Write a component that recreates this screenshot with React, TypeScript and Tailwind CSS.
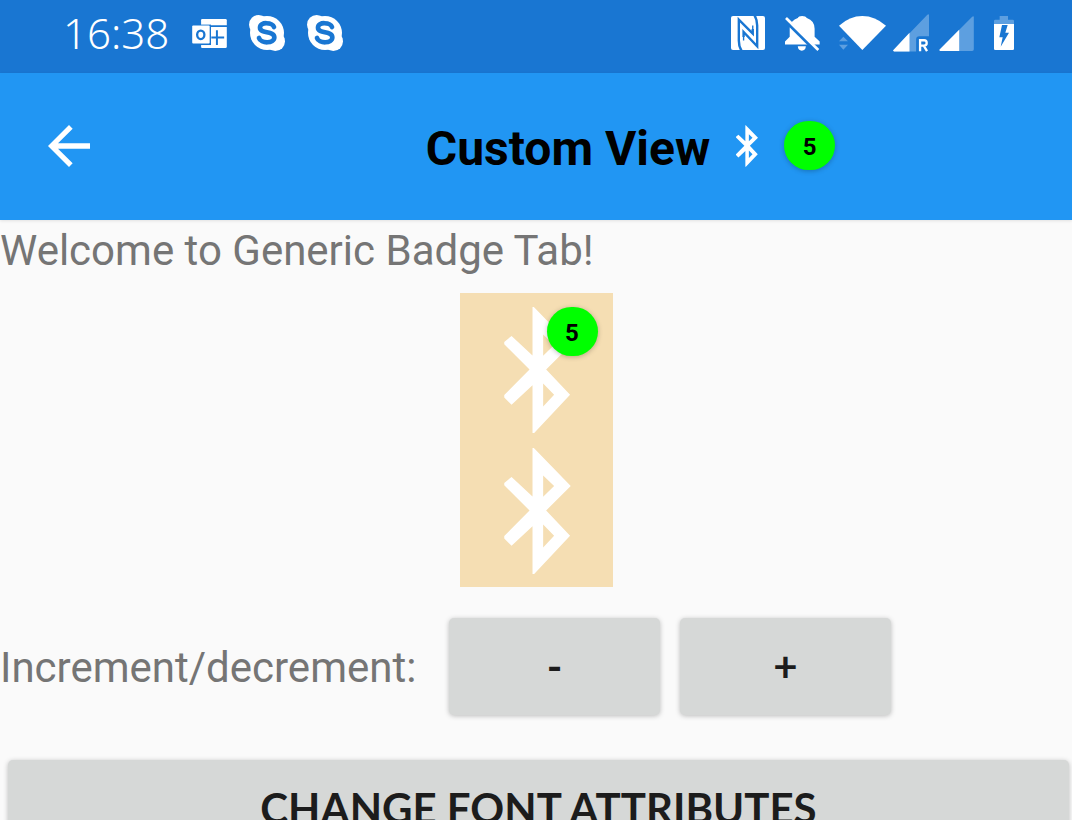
import { useState } from "react";
import type { ReactNode } from "react";

function Bluetooth({ className }: { className: string }) {
  return (
    <svg viewBox="0 0 200 379" className={className} fill="white" fillRule="evenodd" aria-hidden="true">
      <path d="M85 0H89L200 114L126 188L198 264L90 379H85V235L22 294L0 272V265L76 188L0 112V105L22 87L85 146ZM117 83V147L150 114ZM117 230V299L150 264Z" />
    </svg>
  );
}

function Badge({ count }: { count: number }) {
  return (
    <span className="flex h-[49px] w-[51px] items-center justify-center rounded-full bg-[#00ff00] pt-[2px] font-[Roboto,sans-serif] text-2xl font-bold text-black shadow-[0_1px_5px_rgba(0,0,0,0.25)]">
      {count}
    </span>
  );
}

function OutlookIcon() {
  return (
    <svg viewBox="0 0 105 88" className="h-[29px] w-[35px]" aria-hidden="true">
      <path d="M30 0H101Q105 0 105 4V19H27V4Q27 0 30 0Z" fill="white" />
      <path d="M27 24H105V84Q105 88 101 88H30Q27 88 27 84Z" fill="white" />
      <path d="M75 34V79M58 56H97" stroke="#1976d2" strokeWidth="6" />
      <path d="M0 17H57V79H0Z" fill="#1976d2" />
      <rect x="0" y="20" width="53" height="54" rx="3" fill="white" />
      <ellipse cx="26" cy="48" rx="11" ry="13" fill="none" stroke="#1976d2" strokeWidth="7" />
    </svg>
  );
}

function SkypeIcon() {
  return (
    <svg viewBox="0 0 108 108" className="h-9 w-9" aria-hidden="true">
      <circle cx="54" cy="54" r="51" fill="white" />
      <circle cx="29" cy="29" r="29" fill="white" />
      <circle cx="79" cy="79" r="29" fill="white" />
      <path
        d="M75 36C70 22 33 19 33 38C33 57 76 46 76 67C76 87 35 86 30 69"
        fill="none"
        stroke="#1976d2"
        strokeWidth="14"
        strokeLinecap="round"
      />
    </svg>
  );
}

function NfcIcon() {
  return (
    <svg viewBox="0 0 100 100" className="h-[34px] w-[34px]" aria-hidden="true">
      <rect width="100" height="100" rx="6" fill="white" />
      <path d="M31 102Q23 90 23 72V11L64 52V38" fill="none" stroke="#1976d2" strokeWidth="7" />
      <path d="M37 62V47L77 89V28Q77 10 69 -2" fill="none" stroke="#1976d2" strokeWidth="7" />
      <path d="M37 60V72M64 40V28" fill="none" stroke="#1976d2" strokeWidth="4" />
    </svg>
  );
}

function MutedBellIcon() {
  return (
    <svg viewBox="0 0 104 104" className="h-[35px] w-[35px]" aria-hidden="true">
      <path
        d="M38 90H62Q61 103 50 103T38 90ZM0 85V76L14 62V35Q17 13 38 6Q40 0 51 0T65 6Q88 14 88 38V62L103 76V85Z"
        fill="white"
      />
      <path d="M-2 12L94 107" stroke="#1976d2" strokeWidth="9" />
      <path d="M3 6L99 101" stroke="white" strokeWidth="8" />
    </svg>
  );
}

function WifiIcon() {
  return (
    <svg viewBox="0 0 141 102" className="h-[34px] w-[47px]" aria-hidden="true">
      <path d="M0 29Q32 0 70 0T141 29L70 102Z" fill="white" />
      <path d="M0 76L13 62L27 76ZM0 86H27L13 101Z" fill="#5d9fe0" />
    </svg>
  );
}

function RoamingSignalIcon() {
  return (
    <svg viewBox="0 0 109 114" className="h-[38px] w-[36px]" aria-hidden="true">
      <path d="M109 3V67H80Q70 67 70 77V113H3L0 110L104 2Q109 -2 109 3Z" fill="#5d9fe0" />
      <path d="M50 56V113H3L0 110Z" fill="white" />
      <path
        d="M82 112V79H94Q102 79 102 87T94 95H82M93 95L103 112"
        fill="none"
        stroke="white"
        strokeWidth="7"
      />
    </svg>
  );
}

function SignalIcon() {
  return (
    <svg viewBox="0 0 104 105" className="h-[35px] w-[35px]" aria-hidden="true">
      <path d="M104 4V100Q104 105 99 105H3L0 102L99 2Q104 -2 104 4Z" fill="#5d9fe0" />
      <path d="M60 41V105H3L0 102Z" fill="white" />
    </svg>
  );
}

function BatteryIcon() {
  return (
    <svg viewBox="0 0 60 102" className="h-[34px] w-5" aria-hidden="true">
      <path d="M17 0H42V11H56Q60 11 60 15V26H0V15Q0 11 4 11H17Z" fill="#5d9fe0" />
      <path d="M0 24H60V98Q60 102 56 102H4Q0 102 0 98Z" fill="white" />
      <path d="M24 27H41L34 50H45L20 92L26 64H16Z" fill="#1976d2" />
    </svg>
  );
}

function StepButton({ label, onClick, children }: { label: string; onClick: () => void; children: ReactNode }) {
  return (
    <button
      type="button"
      aria-label={label}
      onClick={onClick}
      className="flex h-[97px] w-[211px] items-center justify-center rounded-[5px] bg-[#d6d8d7] font-[Lato,sans-serif] text-[42px] font-bold text-[#1c1c1c] shadow-[0_1px_5px_rgba(0,0,0,0.25)]"
    >
      {children}
    </button>
  );
}

export default function App() {
  const [count, setCount] = useState(5);

  return (
    <div className="min-h-screen bg-[#fafafa] font-['Noto_Sans',sans-serif]">
      <div className="flex h-[73px] items-center justify-between bg-[#1976d2] pr-[58px] pb-[7px] pl-[63px] text-white">
        <div className="flex items-center">
          <time className="text-[42px] leading-none font-light">16:38</time>
          <span className="ml-[23px] flex items-center gap-[22px]">
            <OutlookIcon />
            <SkypeIcon />
            <SkypeIcon />
          </span>
        </div>
        <div className="flex items-center">
          <NfcIcon />
          <span className="ml-5 flex"><MutedBellIcon /></span>
          <span className="ml-[19px] flex"><WifiIcon /></span>
          <span className="ml-[7px] flex"><RoamingSignalIcon /></span>
          <span className="ml-[10px] flex"><SignalIcon /></span>
          <span className="ml-5 flex"><BatteryIcon /></span>
        </div>
      </div>

      <header className="flex h-[147px] items-center bg-[#2196f3] px-12 pb-[2px] shadow-[0_1px_3px_rgba(0,0,0,0.1)]">
        <button type="button" aria-label="Back" className="flex">
          <svg viewBox="0 0 126 126" className="h-[42px] w-[42px]" fill="white" aria-hidden="true">
            <path d="M0 63L63 0L74 11L30 55H126V71H30L74 115L63 126Z" />
          </svg>
        </button>
        <div className="flex flex-1 items-center justify-center pl-[147px]">
          <h1 className="pt-[6px] font-[Roboto,sans-serif] text-5xl font-bold text-black">Custom View</h1>
          <Bluetooth className="ml-[26px] h-[42px] w-[22px]" />
          <span className="ml-[26px]"><Badge count={count} /></span>
        </div>
      </header>

      <main>
        <p className="pt-[2px] font-[Roboto,sans-serif] text-[42px] leading-[58px] text-[#757575]">
          Welcome to Generic Badge Tab!
        </p>
        <div className="mx-auto mt-[13px] flex h-[294px] w-[153px] flex-col items-center gap-[15px] bg-[#f5deb3] pt-[14px] pl-[2px]">
          <div className="relative">
            <Bluetooth className="h-[126px] w-[67px]" />
            <span className="absolute top-0 left-[43px]"><Badge count={count} /></span>
          </div>
          <Bluetooth className="h-[126px] w-[67px]" />
        </div>
        <div className="mt-[31px] flex items-center">
          <span className="w-[449px] pt-[2px] font-[Roboto,sans-serif] text-[42px] text-[#757575]">Increment/decrement:</span>
          <div className="flex gap-5">
            <StepButton label="Decrement" onClick={() => setCount(count - 1)}>-</StepButton>
            <StepButton label="Increment" onClick={() => setCount(count + 1)}>+</StepButton>
          </div>
        </div>
        <div className="mt-[45px] pr-[3px] pl-2">
          <button
            type="button"
            className="h-[97px] w-full rounded-[5px] bg-[#d6d8d7] font-[Lato,sans-serif] text-[42px] font-bold text-[#1c1c1c] shadow-[0_1px_5px_rgba(0,0,0,0.25)]"
          >
            CHANGE FONT ATTRIBUTES
          </button>
        </div>
      </main>
    </div>
  );
}
